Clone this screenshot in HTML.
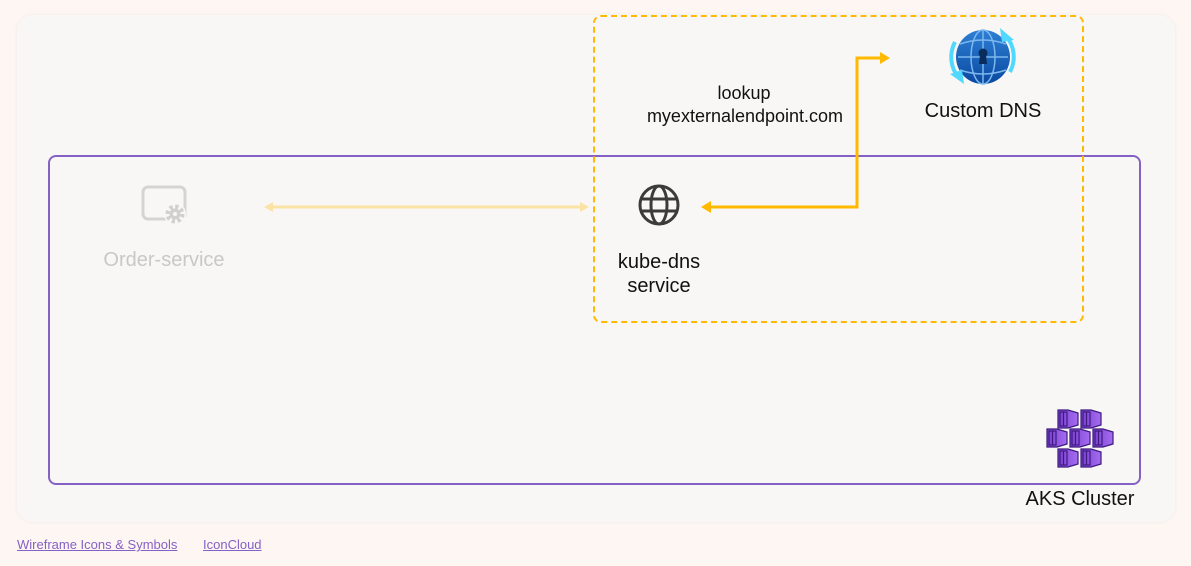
<!DOCTYPE html>
<html><head><meta charset="utf-8"><style>
body{margin:0;width:1191px;height:566px;background:#fdf6f2;font-family:"Liberation Sans",sans-serif;position:relative;overflow:hidden}
.panel{position:absolute;left:17px;top:15px;width:1158px;height:507px;background:#f9f7f5;border-radius:16px;box-shadow:0 0 4px rgba(0,0,0,0.05)}
.aks{position:absolute;left:48px;top:155px;width:1089px;height:326px;border:2px solid #8661c5;border-radius:8px}
.dash{position:absolute;left:593px;top:15px;width:487px;height:304px;border:2px dashed #ffb900;border-radius:8px}
.t{position:absolute;font-size:19px;color:#111;text-align:center;line-height:24px}
a{position:absolute;top:537px;font-size:13px;color:#8661c5;text-decoration:underline}
</style></head><body>
<div class="panel"></div>
<div class="aks"></div>
<div class="dash"></div>
<svg width="1191" height="566" style="position:absolute;left:0;top:0">
<line x1="270" y1="207" x2="583" y2="207" stroke="#fbe3a6" stroke-width="3"/>
<path d="M264 207l9-5v10z" fill="#fbe3a6"/><path d="M589 207l-9-5v10z" fill="#fbe3a6"/>
<path d="M710 207H857V58H881" fill="none" stroke="#ffb900" stroke-width="3"/>
<path d="M701 207l10-6v12z" fill="#ffb900"/><path d="M890 58l-10-6v12z" fill="#ffb900"/>
<rect x="143" y="187" width="42" height="32" rx="5" fill="none" stroke="#d4d4d4" stroke-width="3"/>
<circle cx="175" cy="214" r="11" fill="#f9f7f5"/>
<circle cx="175" cy="214" r="7" fill="none" stroke="#d0d0d0" stroke-width="5" stroke-dasharray="3 2.5"/>
<circle cx="175" cy="214" r="5.5" fill="#d0d0d0"/><circle cx="175" cy="214" r="2" fill="#f9f7f5"/>
<g fill="none" stroke="#3b3b3b" stroke-width="3">
<circle cx="659" cy="205" r="19"/><ellipse cx="659" cy="205" rx="8" ry="19"/>
<line x1="641" y1="199" x2="677" y2="199"/><line x1="641" y1="211" x2="677" y2="211"/></g>
<defs><linearGradient id="g" x1="0" y1="0" x2="0" y2="1"><stop offset="0" stop-color="#2d7fd6"/><stop offset="1" stop-color="#0a4aa0"/></linearGradient>
<linearGradient id="p" x1="0" y1="0" x2="1" y2="0"><stop offset="0" stop-color="#7a3fd0"/><stop offset="1" stop-color="#a56df0"/></linearGradient></defs>
<circle cx="983" cy="57" r="27" fill="url(#g)"/>
<g fill="none" stroke="#7db7ee" stroke-width="1.5"><ellipse cx="983" cy="57" rx="12" ry="27"/><line x1="983" y1="30" x2="983" y2="84"/><path d="M960 44q23 -8 46 0M958 57h50M960 70q23 8 46 0"/></g>
<circle cx="983" cy="53" r="4.5" fill="#0a2c5c"/><path d="M980 55h6l1 9h-8z" fill="#0a2c5c"/>
<path d="M955 42a32 32 0 0 0 4 36" fill="none" stroke="#50d8ff" stroke-width="4"/><path d="M950 74l14 10-2-14z" fill="#50d8ff"/>
<path d="M1010 72a32 32 0 0 0-4-36" fill="none" stroke="#50d8ff" stroke-width="4"/><path d="M1014 40l-14-12 2 14z" fill="#50d8ff"/>
<g id="c" >
</g>
<g stroke="#3e1a80" stroke-width="1.2">
<g transform="translate(1058,410)"><path d="M0 0h10l10 3v12l-10 3H0z" fill="url(#p)"/><rect x="2" y="2" width="7" height="14" fill="none"/><line x1="5.5" y1="2" x2="5.5" y2="16"/></g>
<g transform="translate(1081,410)"><path d="M0 0h10l10 3v12l-10 3H0z" fill="url(#p)"/><rect x="2" y="2" width="7" height="14" fill="none"/><line x1="5.5" y1="2" x2="5.5" y2="16"/></g>
<g transform="translate(1047,429)"><path d="M0 0h10l10 3v12l-10 3H0z" fill="url(#p)"/><rect x="2" y="2" width="7" height="14" fill="none"/><line x1="5.5" y1="2" x2="5.5" y2="16"/></g>
<g transform="translate(1070,429)"><path d="M0 0h10l10 3v12l-10 3H0z" fill="url(#p)"/><rect x="2" y="2" width="7" height="14" fill="none"/><line x1="5.5" y1="2" x2="5.5" y2="16"/></g>
<g transform="translate(1093,429)"><path d="M0 0h10l10 3v12l-10 3H0z" fill="url(#p)"/><rect x="2" y="2" width="7" height="14" fill="none"/><line x1="5.5" y1="2" x2="5.5" y2="16"/></g>
<g transform="translate(1058,449)"><path d="M0 0h10l10 3v12l-10 3H0z" fill="url(#p)"/><rect x="2" y="2" width="7" height="14" fill="none"/><line x1="5.5" y1="2" x2="5.5" y2="16"/></g>
<g transform="translate(1081,449)"><path d="M0 0h10l10 3v12l-10 3H0z" fill="url(#p)"/><rect x="2" y="2" width="7" height="14" fill="none"/><line x1="5.5" y1="2" x2="5.5" y2="16"/></g>
</g>
</svg>
<div class="t" style="left:680px;top:81px;width:128px;font-size:18px">lookup</div>
<div class="t" style="left:620px;top:104px;width:250px;font-size:18px">myexternalendpoint.com</div>
<div class="t" style="left:903px;top:99px;width:160px;font-size:20px">Custom DNS</div>
<div class="t" style="left:64px;top:248px;width:200px;font-size:20px;color:#c8c8c8">Order-service</div>
<div class="t" style="left:589px;top:250px;width:140px;font-size:20px">kube-dns<br>service</div>
<div class="t" style="left:1010px;top:487px;width:140px;font-size:20px">AKS Cluster</div>
<a style="left:17px">Wireframe Icons &amp; Symbols</a>
<a style="left:203px">IconCloud</a>
</body></html>
